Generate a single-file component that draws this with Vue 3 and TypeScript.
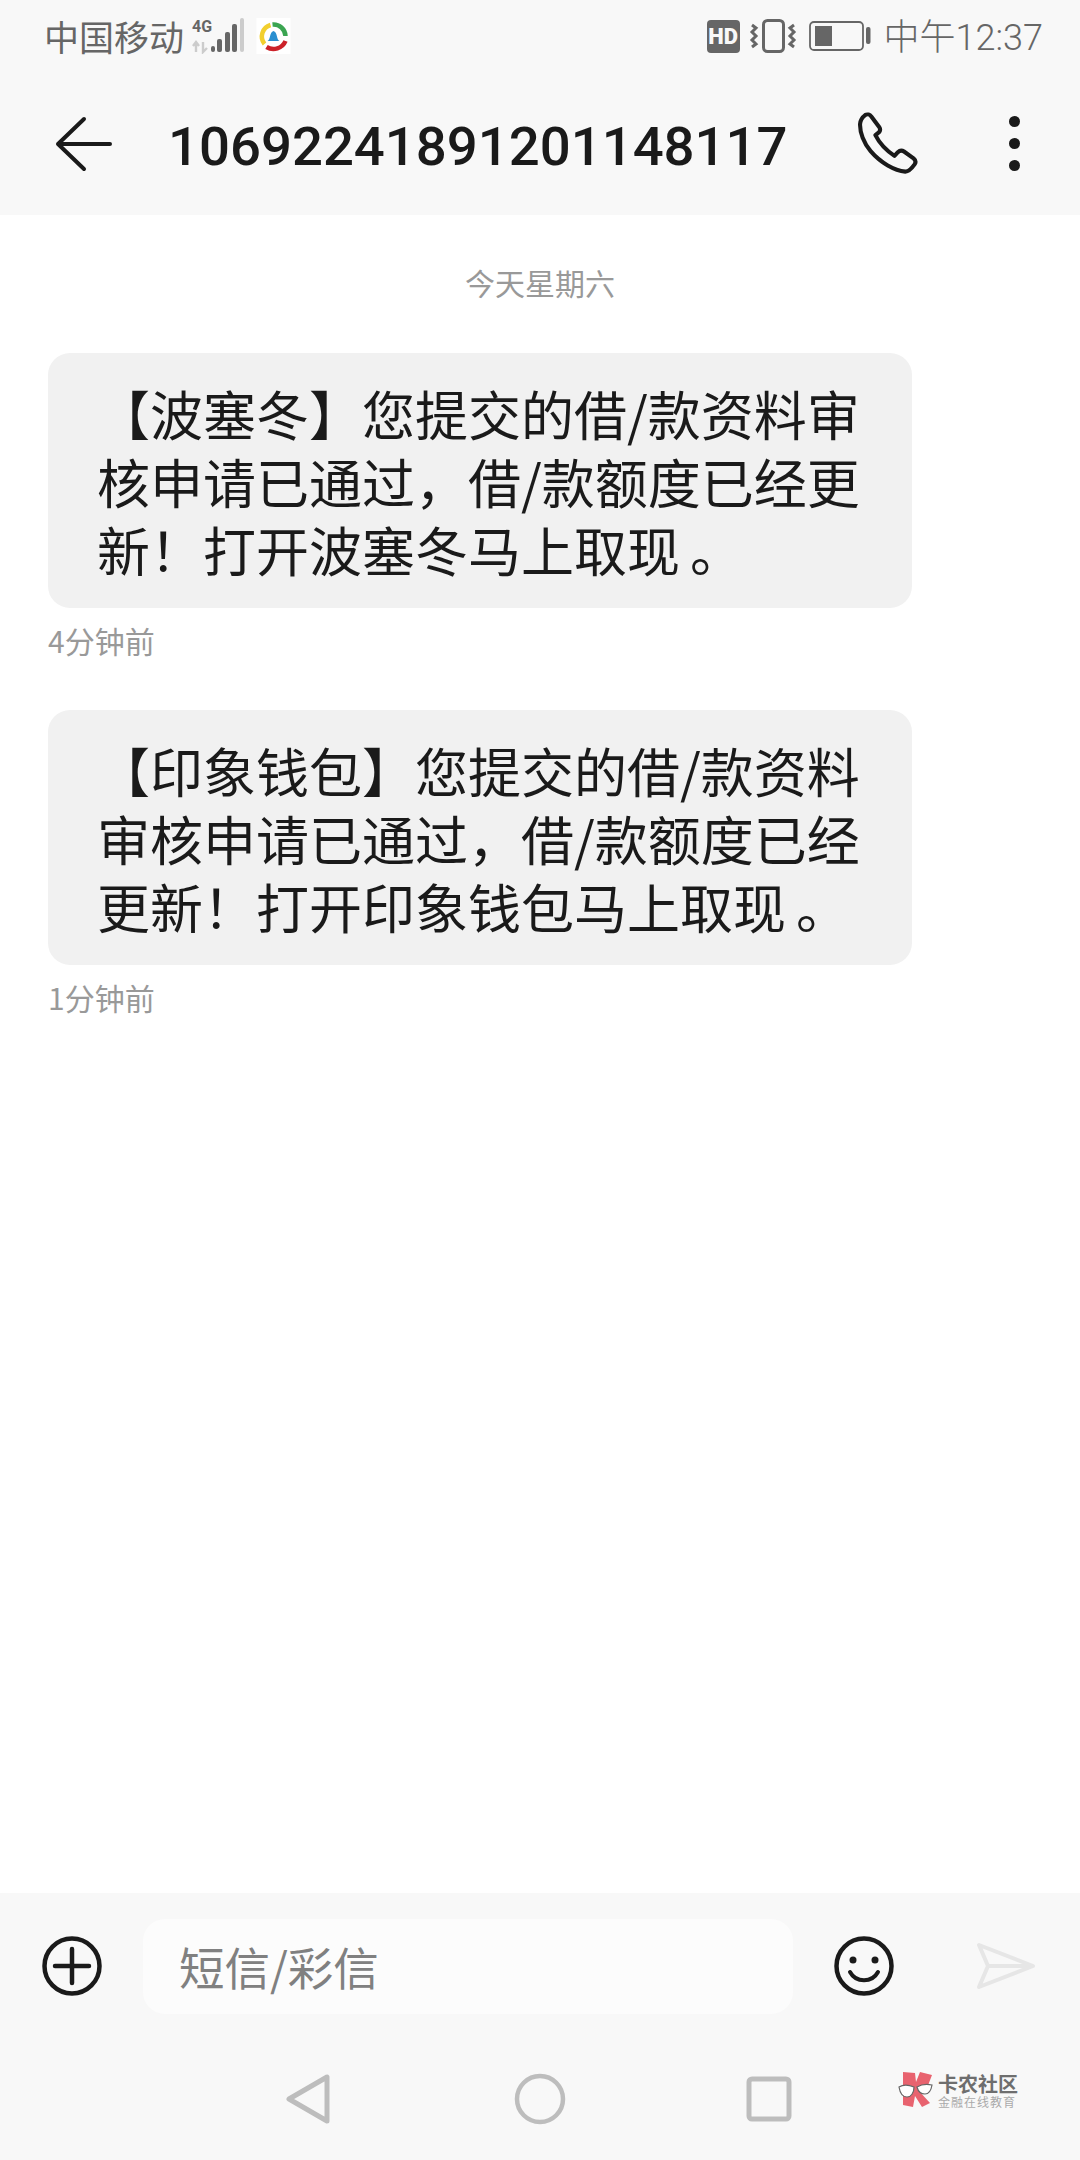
<script setup lang="ts">
interface Msg {
  text: string;
  time: string;
}

// the full stop sits further right in the original font, so it gets its own span
const messages: Msg[] = [
  { text: "【波塞冬】您提交的借/款资料审核申请已通过，借/款额度已经更新！打开波塞冬马上取现", time: "4分钟前" },
  { text: "【印象钱包】您提交的借/款资料审核申请已通过，借/款额度已经更新！打开印象钱包马上取现", time: "1分钟前" },
];
</script>

<template>
  <div class="page">
    <div class="status">
      <span class="carrier">中国移动</span>
      <svg class="signal" width="52" height="36" viewBox="0 0 52 36">
        <text x="0" y="14" class="net">4G</text>
        <path d="M4 24v10M1 28l3-4 3 4M11 24v10l4-4" fill="none" stroke="#ccc" stroke-width="2.4" />
        <rect x="19" y="28" width="4" height="6" rx="2" fill="#666" />
        <rect x="25" y="21" width="5" height="13" rx="2" fill="#666" />
        <rect x="33" y="14" width="5" height="20" rx="2" fill="#666" />
        <rect x="40" y="6" width="5" height="28" rx="2" fill="#666" />
        <rect x="48" y="0" width="4" height="34" rx="2" fill="#ccc" />
      </svg>
      <svg class="appicon" width="35" height="36" viewBox="0 0 34 36">
        <rect width="34" height="36" fill="#fff" />
        <path d="M14 7A12 12 0 0 0 8 26" fill="none" stroke="#f2cf2e" stroke-width="4.5" />
        <path d="M16 6.500A12 12 0 0 1 29 18" fill="none" stroke="#3ba552" stroke-width="4.500" />
        <path d="M29 23A13 13 0 0 1 10 29" fill="none" stroke="#cc2229" stroke-width="4.500" />
        <path d="M11 23c3-1 2-9 6-10 4 1 3 9 6 10z" fill="#2a8fd0" />
      </svg>
      <div class="spacer"></div>
      <span class="hd">HD</span>
      <svg class="vib" width="48" height="34" viewBox="0 0 48 34">
        <rect x="14.500" y="1.500" width="20" height="31" rx="4" fill="none" stroke="#666" stroke-width="3" />
        <path d="M3 6l4 3-4 4 4 4-4 4 4 4-4 3M45 6l-4 3 4 4-4 4 4 4-4 4 4 3" fill="none" stroke="#666" stroke-width="3" />
      </svg>
      <svg class="batt" width="62" height="30" viewBox="0 0 62 30">
        <rect x="1" y="1" width="53" height="28" rx="4" fill="none" stroke="#666" stroke-width="1.800" />
        <rect x="6" y="5" width="17" height="20" fill="#666" />
        <rect x="57" y="6" width="4.500" height="17" rx="2" fill="#666" />
      </svg>
      <span class="clock">中午12:37</span>
    </div>

    <div class="header">
      <svg class="back" width="58" height="56" viewBox="0 0 58 56">
        <path d="M29 3L3 28l26 25M3 28h52" fill="none" stroke="#1a1a1a" stroke-width="4" stroke-linecap="round" stroke-linejoin="round" />
      </svg>
      <span class="title">10692241891201148117</span>
      <svg class="phone" width="62" height="63" viewBox="920 340 182 185">
        <path d="M944 349C950 345 958 348 962 353L985 384C989 390 988 396 984 400L974 408C985 430 1005 452 1030 469L1040 458C1045 453 1052 452 1058 456L1086 476C1092 481 1093 488 1089 494C1082 504 1074 515 1062 515C1030 512 990 490 960 455C940 432 928 400 929 375C930 363 936 355 944 349Z" fill="none" stroke="#1a1a1a" stroke-width="12" stroke-linejoin="round" />
      </svg>
      <div class="dots">
        <i></i><i></i><i></i>
      </div>
    </div>

    <div class="thread">
      <div class="day">今天星期六</div>
      <div v-for="m in messages" :key="m.time" class="msg">
        <div class="bubble">{{ m.text }}<span class="stop">。</span></div>
        <div class="time">{{ m.time }}</div>
      </div>
    </div>

    <div class="bottom">
      <div class="composer">
        <svg width="62" height="62" viewBox="0 0 62 62">
          <circle cx="31" cy="31" r="27.500" fill="none" stroke="#1a1a1a" stroke-width="4.500" />
          <path d="M14 31h34M31 14v34" stroke="#1a1a1a" stroke-width="4.500" stroke-linecap="round" />
        </svg>
        <div class="input">短信/彩信</div>
        <svg width="62" height="62" viewBox="0 0 62 62">
          <circle cx="31" cy="31" r="27.500" fill="none" stroke="#1a1a1a" stroke-width="4.500" />
          <circle cx="20" cy="25" r="3.500" fill="#1a1a1a" />
          <circle cx="42" cy="25" r="3.500" fill="#1a1a1a" />
          <path d="M17 37c6 11 22 11 28 0" fill="none" stroke="#1a1a1a" stroke-width="4" stroke-linecap="round" />
        </svg>
        <svg class="send" width="60" height="48" viewBox="0 0 60 48">
          <path d="M3 3l54 21L3 45l9-21zM12 24h45" fill="none" stroke="#e6e6e6" stroke-width="4" stroke-linejoin="round" />
        </svg>
      </div>
      <div class="nav">
        <svg width="46" height="52" viewBox="0 0 46 52">
          <path d="M42 4v44L4 26z" fill="none" stroke="#bdbdbd" stroke-width="5" stroke-linejoin="round" />
        </svg>
        <svg width="52" height="52" viewBox="0 0 52 52">
          <circle cx="26" cy="26" r="23" fill="none" stroke="#bdbdbd" stroke-width="4.500" />
        </svg>
        <svg width="46" height="46" viewBox="0 0 46 46">
          <rect x="3" y="3" width="40" height="40" rx="3" fill="none" stroke="#bdbdbd" stroke-width="5" />
        </svg>
      </div>
      <div class="mark">
        <svg width="38" height="38" viewBox="0 0 38 38">
          <path d="M5 0l12 1 1 9 4-10 12 3-5 13-8 3 11 12-8 4-7-11-2 11-10-2z" fill="#e8636f" />
          <path d="M1 15c5-3 10-2 15 0 0 6-3 10-7 10-4 0-7-4-8-10zM19 15c5-3 10-3 15-2-1 6-4 9-7 9-5 0-7-3-8-7z" fill="#fff" stroke="#666" stroke-width="1.200" />
        </svg>
        <div class="mark-text">
          <span class="mark-name">卡农社区</span>
          <span class="mark-sub">金融在线教育</span>
        </div>
      </div>
    </div>
  </div>
</template>

<style scoped>
.page {
  position: relative;
  width: 1080px;
  height: 2160px;
  display: flex;
  flex-direction: column;
  background: #fff;
  font-family: "Noto Sans CJK SC", "Noto Sans", sans-serif;
  overflow: hidden;
}

.status {
  height: 72px;
  flex: none;
  display: flex;
  align-items: center;
  padding: 0 37px 0 44px;
  background: #f8f8f8;
  color: #666;
}

.carrier {
  font-size: 35px;
  line-height: 72px;
}

.signal {
  margin-left: 8px;
}

.net {
  font-family: Roboto, sans-serif;
  font-size: 16px;
  font-weight: 700;
  fill: #666;
}

.appicon {
  margin-left: 12px;
}

.spacer {
  flex: 1;
}

.hd {
  width: 33px;
  height: 33px;
  border-radius: 4px;
  background: #666;
  color: #f8f8f8;
  font-family: Roboto, sans-serif;
  font-size: 22px;
  font-weight: 900;
  line-height: 33px;
  text-align: center;
}

.vib {
  margin-left: 9px;
}

.batt {
  margin-left: 12px;
}

.clock {
  margin-left: 13px;
  padding-top: 3px;
  font-family: Roboto, "Noto Sans CJK SC", sans-serif;
  font-size: 36px;
  font-weight: 300;
  line-height: 72px;
}

.header {
  height: 143px;
  flex: none;
  display: flex;
  align-items: center;
  background: #f8f8f8;
  padding-left: 55px;
}

.back {
  flex: none;
}

.title {
  margin-left: 55px;
  padding-top: 5px;
  color: #1a1a1a;
  font-family: Roboto, sans-serif;
  font-size: 54.5px;
  font-weight: 500;
}

.phone {
  margin-left: 69px;
}

.dots {
  margin-left: 90px;
  display: flex;
  flex-direction: column;
  gap: 11px;
}

.dots i {
  display: block;
  width: 11px;
  height: 11px;
  border-radius: 50%;
  background: #1a1a1a;
}

.thread {
  flex: 1;
  padding: 0 48px;
}

.day {
  margin-top: 44px;
  margin-bottom: 48px;
  color: #999;
  font-size: 30px;
  line-height: 46px;
  text-align: center;
}

.msg {
  margin-bottom: 50px;
}

.bubble {
  width: 864px;
  box-sizing: border-box;
  padding: 26px 48px 25px 49px;
  border-radius: 22px;
  background: #f1f1f1;
  color: #1a1a1a;
  font-size: 53px;
  line-height: 68px;
}

.stop {
  margin-left: 10px;
}

.time {
  margin-top: 12px;
  color: #999;
  font-size: 30px;
  line-height: 40px;
}

.bottom {
  height: 267px;
  flex: none;
  background: #f8f8f8;
  display: flex;
  flex-direction: column;
}

.composer {
  height: 146px;
  display: flex;
  align-items: center;
  padding-left: 41px;
}

.input {
  width: 650px;
  height: 95px;
  margin: 0 40px;
  padding-left: 36px;
  box-sizing: border-box;
  border-radius: 22px;
  background: #fcfcfc;
  color: #808080;
  font-size: 45.5px;
  line-height: 95px;
}

.send {
  margin-left: 81px;
}

.nav {
  margin-top: 34px;
  display: flex;
  align-items: center;
  padding-left: 285px;
}

.nav svg:nth-child(2) {
  margin-left: 183px;
}

.nav svg:nth-child(3) {
  margin-left: 180px;
}

.mark {
  position: absolute;
  left: 898px;
  bottom: 50px;
  display: flex;
  align-items: center;
}

.mark-text {
  display: flex;
  flex-direction: column;
  margin-left: 2px;
}

.mark-name {
  color: #6e6e6e;
  font-size: 20px;
  font-weight: 700;
  line-height: 22px;
}

.mark-sub {
  color: #aaa;
  font-size: 12px;
  line-height: 14px;
  letter-spacing: 1px;
}
</style>
